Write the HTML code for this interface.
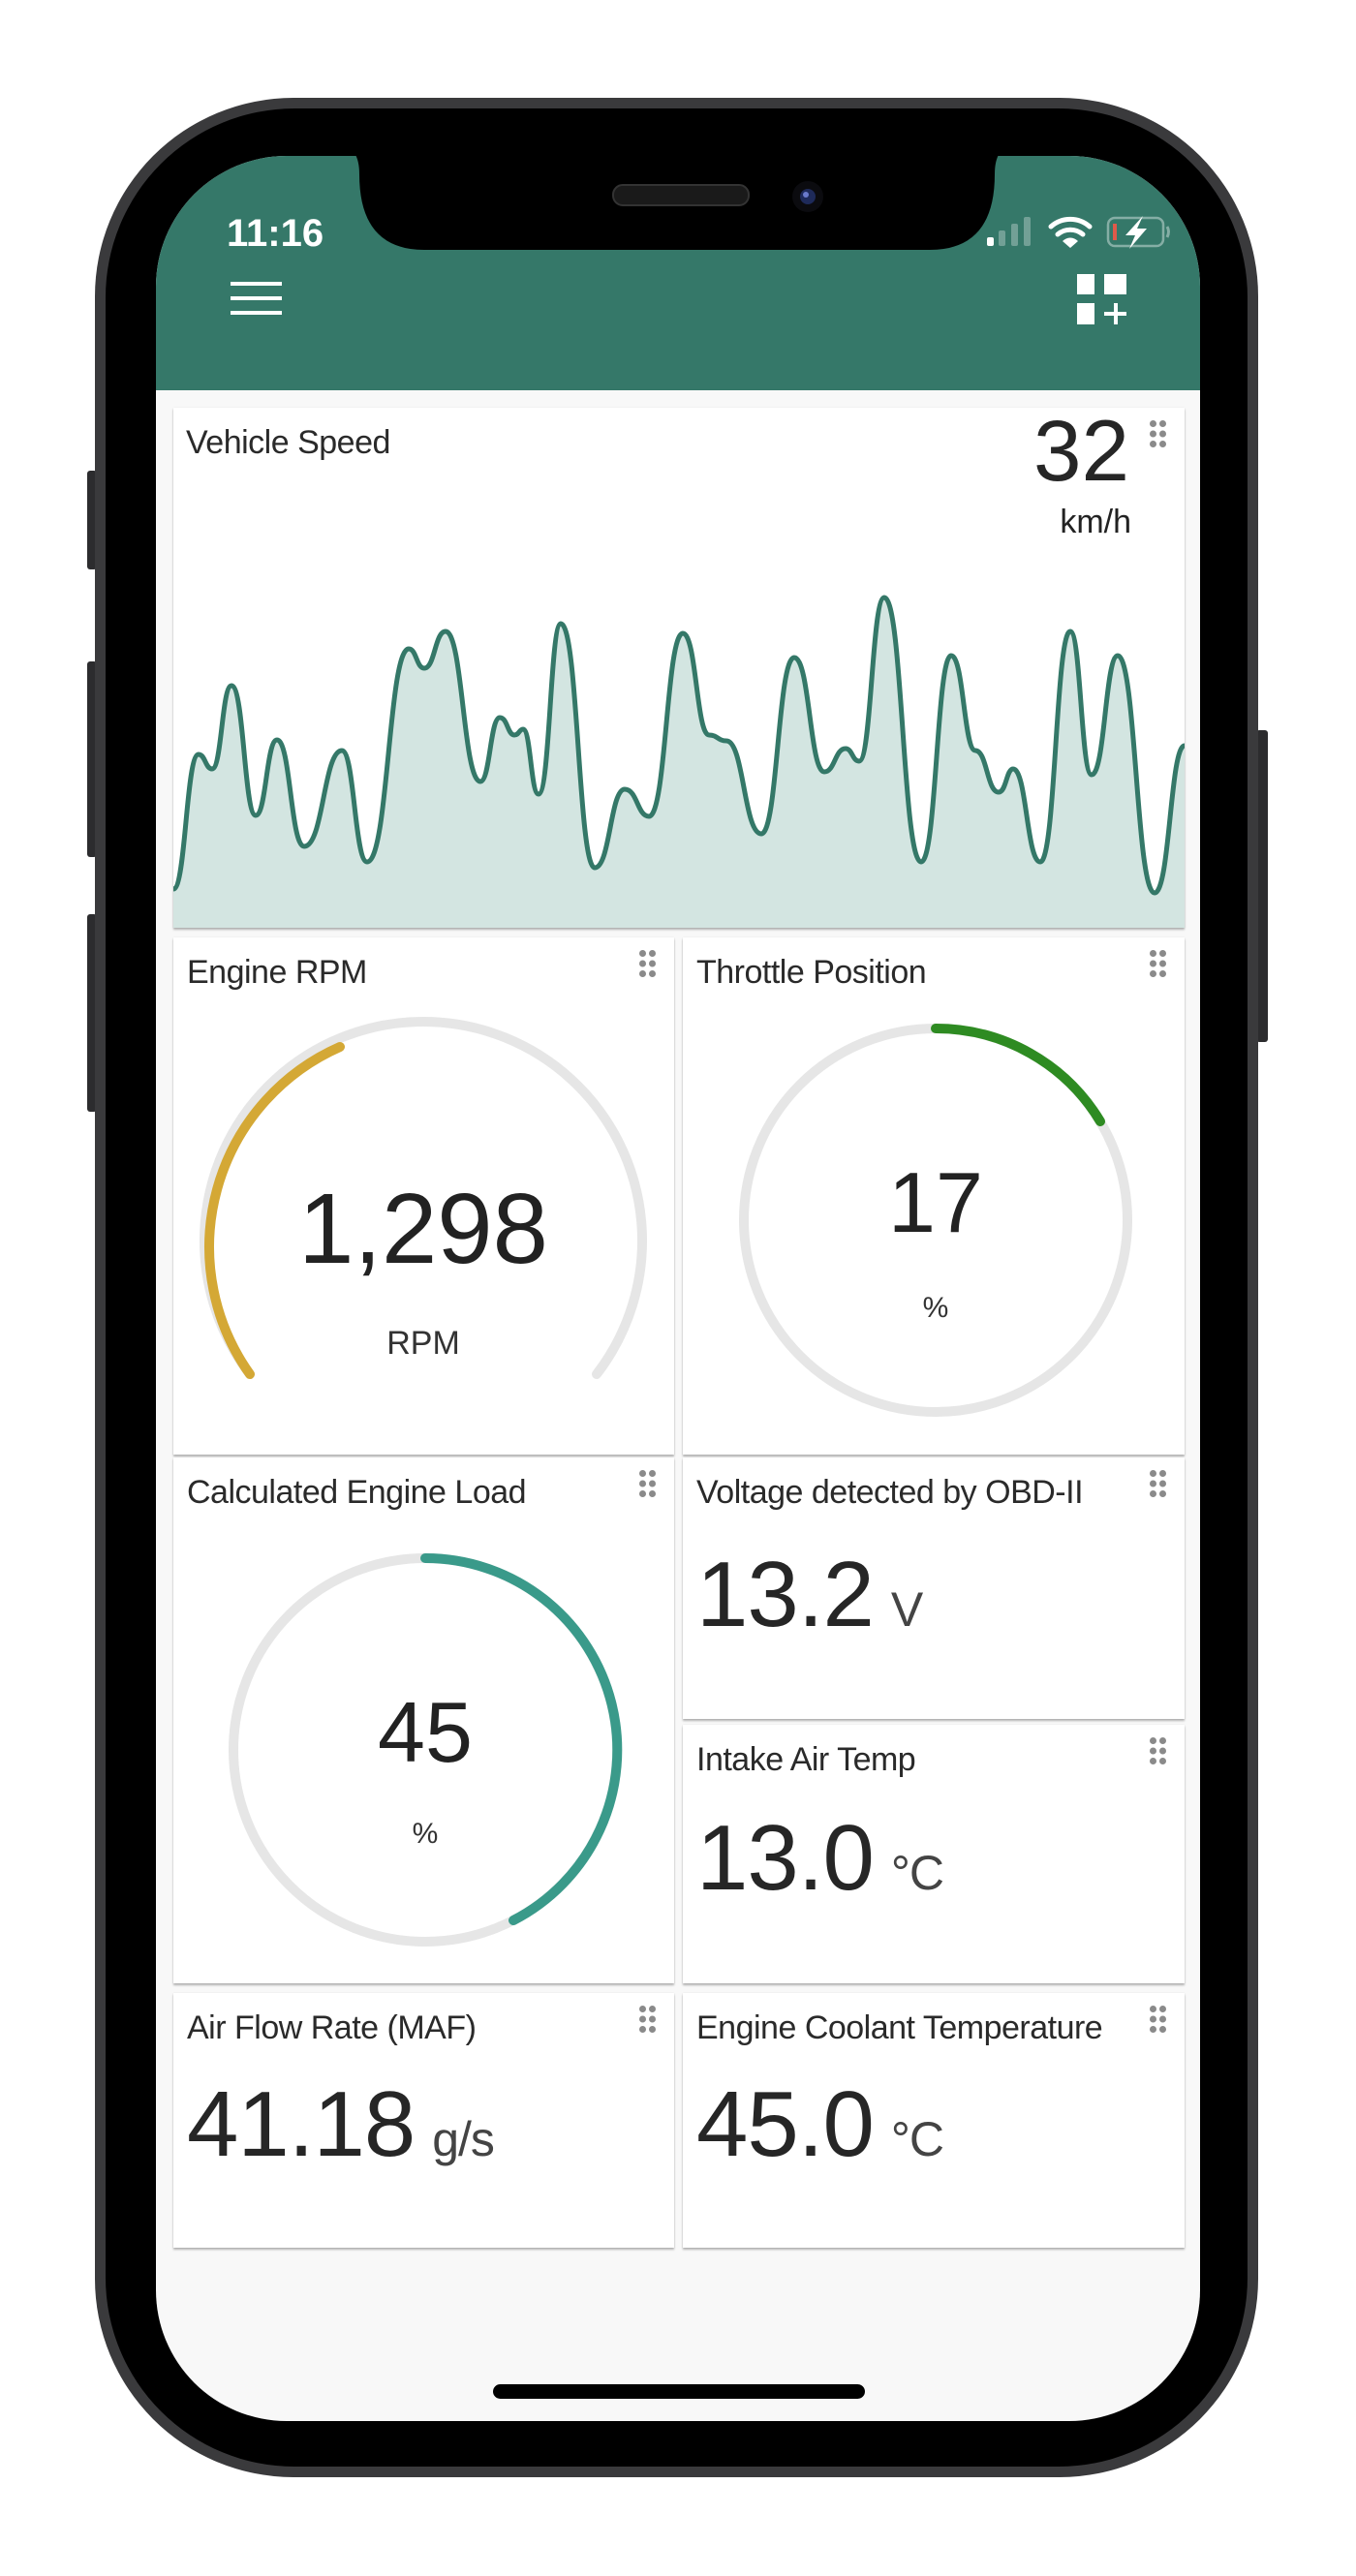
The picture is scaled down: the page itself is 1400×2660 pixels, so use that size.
<!DOCTYPE html>
<html><head><meta charset="utf-8"><style>
*{margin:0;padding:0;box-sizing:border-box}
body{width:1400px;height:2660px;background:#fff;position:relative;overflow:hidden;font-family:"Liberation Sans",Arial,sans-serif;color:#222}
.abs{position:absolute}
.card{position:absolute;background:#fff;box-shadow:0 2px 2px rgba(0,0,0,.28),0 0 1px rgba(0,0,0,.12)}
.t{position:absolute;left:14px;top:16px;font-size:34px;line-height:40px;color:#2a2a2a;white-space:nowrap;letter-spacing:-0.5px}
.v{position:absolute;left:14px;font-size:96px;line-height:96px;white-space:nowrap;letter-spacing:-1px;color:#262626}
.v span{font-size:50px;margin-left:18px;color:#444}
</style></head><body>
<div class="abs" style="left:90px;top:486px;width:10px;height:102px;background:#2c2c2e;border-radius:3px"></div>
<div class="abs" style="left:90px;top:683px;width:10px;height:202px;background:#2c2c2e;border-radius:3px"></div>
<div class="abs" style="left:90px;top:944px;width:10px;height:204px;background:#2c2c2e;border-radius:3px"></div>
<div class="abs" style="left:1297px;top:754px;width:12px;height:322px;background:#2c2c2e;border-radius:3px"></div>
<div class="abs" style="left:98px;top:101px;width:1201px;height:2457px;border-radius:205px;background:#3a3a3c"></div>
<div class="abs" style="left:109px;top:112px;width:1179px;height:2435px;border-radius:195px;background:#000"></div>
<div class="abs" style="left:161px;top:161px;width:1078px;height:2339px;border-radius:135px;background:#f8f8f8;overflow:hidden">
  <div class="abs" style="left:0;top:0;width:1078px;height:242px;background:#357869"></div>
</div>
<svg class="abs" style="left:0;top:0" width="1400" height="400">
<path d="M352,150 L1046,150 Q1027,152 1027,180 Q1027,258 960,258 L438,258 Q371,258 371,180 Q371,152 352,150 Z" fill="#000"/>
<rect x="633" y="191" width="140" height="21" rx="10" fill="#1a1a1a" stroke="#333" stroke-width="2"/>
<circle cx="834" cy="203" r="16" fill="#0b0b0f"/><circle cx="834" cy="203" r="8" fill="#1e2a5a"/><circle cx="832" cy="201" r="3" fill="#6a7acc"/>
<text x="234" y="254" fill="#fff" font-size="40" font-weight="bold" font-family="Liberation Sans,sans-serif">11:16</text>
<rect x="1019" y="245" width="7" height="9" rx="2" fill="#fff"/>
<rect x="1031" y="238" width="7" height="16" rx="2" fill="#fff" opacity=".3"/>
<rect x="1044" y="231" width="7" height="23" rx="2" fill="#fff" opacity=".3"/>
<rect x="1057" y="224" width="7" height="30" rx="2" fill="#fff" opacity=".3"/>
<path d="M1085,234 A30,30 0 0 1 1125,234" stroke="#fff" stroke-width="5" fill="none" stroke-linecap="round"/>
<path d="M1092,242 A20,20 0 0 1 1118,242" stroke="#fff" stroke-width="5" fill="none" stroke-linecap="round"/>
<path d="M1097,249 L1105,256 L1113,249 A11,11 0 0 0 1097,249 Z" fill="#fff"/>
<rect x="1144" y="225" width="57" height="29" rx="7" fill="none" stroke="#fff" stroke-opacity=".4" stroke-width="2.5"/>
<rect x="1149" y="231" width="4" height="17" fill="#e05a4a"/>
<path d="M1205,234 Q1208,239 1205,245" stroke="#fff" stroke-opacity=".4" stroke-width="3" fill="none"/>
<path d="M1180,223 L1162,243 L1172,243 L1166,257 L1184,236 L1174,236 Z" fill="#fff"/>
<rect x="238" y="291" width="53" height="4" fill="#fff"/><rect x="238" y="306" width="53" height="4" fill="#fff"/><rect x="238" y="321" width="53" height="4" fill="#fff"/>
<rect x="1112" y="283" width="18" height="21" fill="#fff"/><rect x="1140" y="283" width="23" height="21" fill="#fff"/>
<rect x="1112" y="313" width="18" height="22" fill="#fff"/>
<rect x="1140" y="322" width="23" height="4" fill="#fff"/><rect x="1150" y="313" width="4" height="22" fill="#fff"/>
</svg>

<div class="card" style="left:179px;top:421px;width:1044px;height:537px">
  <div class="t" style="left:13px;top:16px">Vehicle Speed</div>
  <div class="abs" style="right:57px;top:-6px;font-size:89px;line-height:100px;color:#262626">32</div>
  <div class="abs" style="right:55px;top:98px;font-size:34px;line-height:40px">km/h</div>
</div>
<div class="card" style="left:179px;top:968px;width:517px;height:534px"><div class="t">Engine RPM</div></div>
<div class="card" style="left:705px;top:968px;width:518px;height:534px"><div class="t">Throttle Position</div></div>
<div class="card" style="left:179px;top:1505px;width:517px;height:543px"><div class="t">Calculated Engine Load</div></div>
<div class="card" style="left:705px;top:1505px;width:518px;height:270px"><div class="t">Voltage detected by OBD-II</div><div class="v" style="top:94px">13.2<span>V</span></div></div>
<div class="card" style="left:705px;top:1781px;width:518px;height:267px"><div class="t">Intake Air Temp</div><div class="v" style="top:90px">13.0<span>°C</span></div></div>
<div class="card" style="left:179px;top:2058px;width:517px;height:263px"><div class="t">Air Flow Rate (MAF)</div><div class="v" style="top:88px">41.18<span>g/s</span></div></div>
<div class="card" style="left:705px;top:2058px;width:518px;height:263px"><div class="t">Engine Coolant Temperature</div><div class="v" style="top:88px">45.0<span>°C</span></div></div>

<svg class="abs" style="left:0;top:0" width="1400" height="2660">
<defs><g id="d" fill="#8a8a8a"><circle cx="3.5" cy="3.5" r="3.5"/><circle cx="13.5" cy="3.5" r="3.5"/><circle cx="3.5" cy="14" r="3.5"/><circle cx="13.5" cy="14" r="3.5"/><circle cx="3.5" cy="24.5" r="3.5"/><circle cx="13.5" cy="24.5" r="3.5"/></g></defs>
<use href="#d" x="1187" y="434"/>
<use href="#d" x="660" y="981"/><use href="#d" x="1187" y="981"/>
<use href="#d" x="660" y="1518"/><use href="#d" x="1187" y="1518"/>
<use href="#d" x="1187" y="1794"/>
<use href="#d" x="660" y="2071"/><use href="#d" x="1187" y="2071"/>
<path d="M179,918 C192,918 192,779 205,779 C212,779 212,794 219,794 C229,794 229,708 239,708 C252,708 252,842 264,842 C275,842 275,764 286,764 C300,764 300,874 314,874 C334,874 334,775 353,775 C366,775 366,890 379,890 C401,890 401,670 422,670 C430,670 430,690 438,690 C449,690 449,652 460,652 C478,652 478,807 496,807 C506,807 506,741 516,741 C524,741 524,759 531,759 C536,759 536,753 540,753 C548,753 548,820 556,820 C568,820 568,644 579,644 C597,644 597,896 614,896 C630,896 630,815 645,815 C658,815 658,843 670,843 C688,843 688,654 705,654 C719,654 719,759 732,759 C741,759 741,765 750,765 C768,765 768,861 786,861 C803,861 803,679 820,679 C836,679 836,797 851,797 C862,797 862,773 873,773 C880,773 880,786 887,786 C900,786 900,617 913,617 C932,617 932,890 951,890 C967,890 967,677 982,677 C995,677 995,775 1007,775 C1019,775 1019,818 1031,818 C1039,818 1039,794 1046,794 C1060,794 1060,890 1074,890 C1090,890 1090,652 1105,652 C1116,652 1116,800 1127,800 C1141,800 1141,677 1154,677 C1173,677 1173,922 1192,922 C1208,922 1208,770 1223,770 L1223,958 L179,958 Z" fill="#d3e5e1"/>
<path d="M179,918 C192,918 192,779 205,779 C212,779 212,794 219,794 C229,794 229,708 239,708 C252,708 252,842 264,842 C275,842 275,764 286,764 C300,764 300,874 314,874 C334,874 334,775 353,775 C366,775 366,890 379,890 C401,890 401,670 422,670 C430,670 430,690 438,690 C449,690 449,652 460,652 C478,652 478,807 496,807 C506,807 506,741 516,741 C524,741 524,759 531,759 C536,759 536,753 540,753 C548,753 548,820 556,820 C568,820 568,644 579,644 C597,644 597,896 614,896 C630,896 630,815 645,815 C658,815 658,843 670,843 C688,843 688,654 705,654 C719,654 719,759 732,759 C741,759 741,765 750,765 C768,765 768,861 786,861 C803,861 803,679 820,679 C836,679 836,797 851,797 C862,797 862,773 873,773 C880,773 880,786 887,786 C900,786 900,617 913,617 C932,617 932,890 951,890 C967,890 967,677 982,677 C995,677 995,775 1007,775 C1019,775 1019,818 1031,818 C1039,818 1039,794 1046,794 C1060,794 1060,890 1074,890 C1090,890 1090,652 1105,652 C1116,652 1116,800 1127,800 C1141,800 1141,677 1154,677 C1173,677 1173,922 1192,922 C1208,922 1208,770 1223,770" fill="none" stroke="#347868" stroke-width="5"/>
<path d="M258,1419 A226,226 0 1 1 616,1419" fill="none" stroke="#e6e6e6" stroke-width="10" stroke-linecap="round"/>
<path d="M258,1419 A226,226 0 0 1 351,1081" fill="none" stroke="#d4a835" stroke-width="10" stroke-linecap="round"/>
<text x="437" y="1304" text-anchor="middle" font-size="103" fill="#222" font-family="Liberation Sans,sans-serif">1,298</text>
<text x="437" y="1398" text-anchor="middle" font-size="34" fill="#333" font-family="Liberation Sans,sans-serif">RPM</text>
<circle cx="966" cy="1260" r="198" fill="none" stroke="#e6e6e6" stroke-width="10"/>
<path d="M966,1062 A198,198 0 0 1 1136,1158" fill="none" stroke="#2e8b22" stroke-width="10" stroke-linecap="round"/>
<text x="966" y="1272" text-anchor="middle" font-size="88" fill="#222" font-family="Liberation Sans,sans-serif">17</text>
<text x="966" y="1360" text-anchor="middle" font-size="30" fill="#333" font-family="Liberation Sans,sans-serif">%</text>
<circle cx="439" cy="1807" r="198" fill="none" stroke="#e6e6e6" stroke-width="10"/>
<path d="M439,1609 A198,198 0 0 1 530,1983" fill="none" stroke="#3a9a8a" stroke-width="10" stroke-linecap="round"/>
<text x="439" y="1819" text-anchor="middle" font-size="88" fill="#222" font-family="Liberation Sans,sans-serif">45</text>
<text x="439" y="1903" text-anchor="middle" font-size="30" fill="#333" font-family="Liberation Sans,sans-serif">%</text>
<rect x="509" y="2462" width="384" height="15" rx="7.5" fill="#000"/>
</svg>
</body></html>
